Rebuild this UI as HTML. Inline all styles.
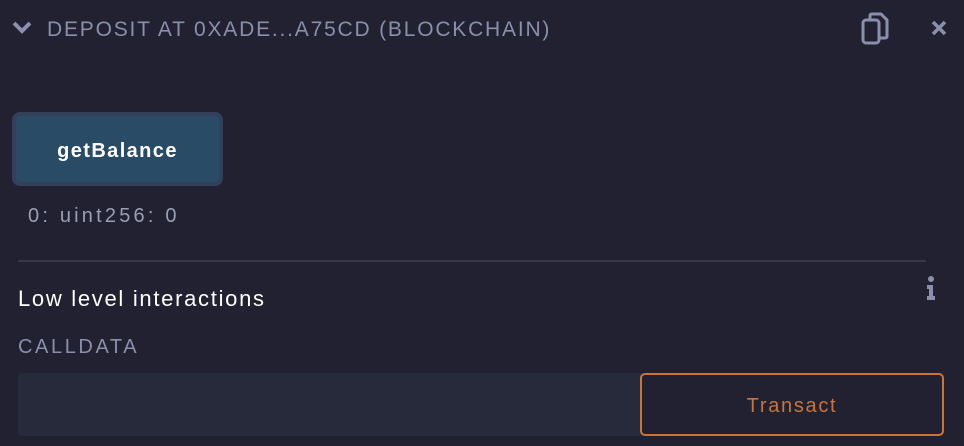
<!DOCTYPE html>
<html><head><style>
body{margin:0;width:964px;height:446px;background:#222131;font-family:"Liberation Sans",sans-serif;position:relative;overflow:hidden}
.a{position:absolute;white-space:nowrap}
</style></head><body>
<svg class="a" style="left:12px;top:20px" width="20" height="14" viewBox="0 0 20 14"><path d="M2 3 L10 11 L18 3" stroke="#8a8fab" stroke-width="4" fill="none"/></svg>
<div class="a" style="left:47px;top:18px;font-size:21px;color:#8a8fab;letter-spacing:1.8px">DEPOSIT AT 0XADE...A75CD (BLOCKCHAIN)</div>
<svg class="a" style="left:861px;top:12px" width="30" height="34" viewBox="0 0 30 34"><rect x="2" y="8" width="16" height="23" rx="3" stroke="#8a8fab" stroke-width="3" fill="none"/><path d="M9 8 V4 Q9 2 11 2 H20 L26 8 V24 Q26 26 24 26 H18" stroke="#8a8fab" stroke-width="3" fill="none"/></svg>
<svg class="a" style="left:931px;top:20px" width="16" height="16" viewBox="0 0 16 16"><path d="M2 2 L14 14 M14 2 L2 14" stroke="#8a8fab" stroke-width="3.5"/></svg>
<div class="a" style="left:12px;top:112px;width:203px;height:66px;border:4px solid #34405a;border-radius:8px;background:#2a4b66;color:#fff;font-weight:bold;font-size:20px;letter-spacing:1.4px;text-align:center;line-height:70px">getBalance</div>
<div class="a" style="left:28px;top:205px;font-size:20px;color:#9a9fb3;letter-spacing:3.2px">0: uint256: 0</div>
<div class="a" style="left:18px;top:260px;width:908px;height:2px;background:#363849"></div>
<div class="a" style="left:18px;top:286px;font-size:22px;color:#fff;letter-spacing:1.7px">Low level interactions</div>
<svg class="a" style="left:924px;top:275px" width="14" height="26" viewBox="0 0 14 26"><circle cx="7" cy="4" r="3" fill="#8a8fab"/><path d="M3 10 H9 V21 H11 V25 H3 V21 H5 V14 H3 Z" fill="#8a8fab"/></svg>
<div class="a" style="left:18px;top:336px;font-size:20px;color:#8a8fab;letter-spacing:2.6px">CALLDATA</div>
<div class="a" style="left:18px;top:373px;width:624px;height:63px;background:#272a3a;border-radius:4px 0 0 4px"></div>
<div class="a" style="left:640px;top:373px;width:300px;height:59px;border:2px solid #c97539;border-radius:5px;color:#c97539;font-size:20px;letter-spacing:1.7px;text-align:center;line-height:63px">Transact</div>
</body></html>
